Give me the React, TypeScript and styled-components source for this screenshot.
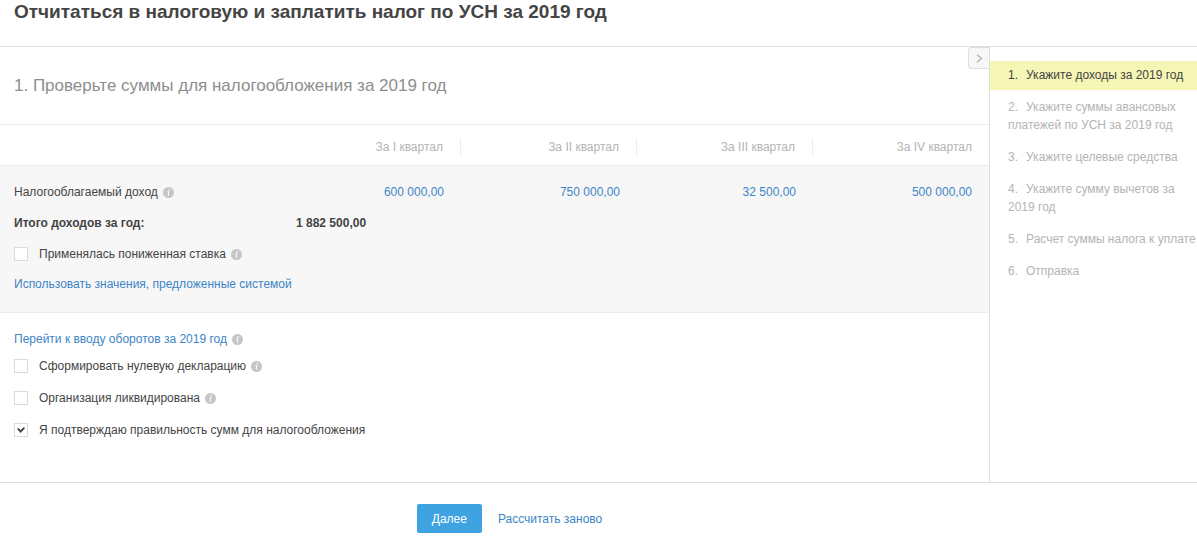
import React from 'react';
import styled, { createGlobalStyle } from 'styled-components';

const GlobalStyle = createGlobalStyle`
  *, *::before, *::after { box-sizing: border-box; }
  body {
    margin: 0;
    background: #fff;
    color: #444;
    font: 12px/18px "Liberation Sans", Arial, sans-serif;
  }
`;

const Header = styled.header`
  padding: 0 14px 22px;
  border-bottom: 1px solid #dedede;
`;

const Title = styled.h1`
  margin: 0;
  font-size: 19px;
  line-height: 24px;
`;

const Body = styled.div`
  display: grid;
  grid-template-columns: minmax(0, 1fr) 208px;
`;

const Main = styled.main`
  display: flex;
  flex-direction: column;
  position: relative;
`;

const Toggle = styled.button`
  position: absolute;
  top: 0;
  right: 0;
  display: flex;
  align-items: center;
  justify-content: center;
  width: 21px;
  height: 22px;
  padding: 0;
  border: 1px solid #dedede;
  border-right: 0;
  border-radius: 4px 0 0 4px;
  background: #f7f7f7;
  color: #b4b4b4;
`;

const StepTitle = styled.h2`
  margin: 0;
  padding: 27px 14px 26px;
  font-size: 17px;
  font-weight: 400;
  line-height: 24px;
  color: #8e8e8e;
`;

const Table = styled.table`
  width: 100%;
  border-collapse: collapse;
  table-layout: fixed;
`;

const HeadRow = styled.tr`
  border: solid #ececec;
  border-width: 1px 0;
`;

const Col = styled.col<{ $wide?: boolean }>`
  width: ${(p) => (p.$wide ? 'auto' : '176px')};
`;

const HeadCell = styled.th`
  padding: 13px 0 9px;
  font-weight: 400;
  color: #b4b4b4;
`;

const HeadLabel = styled.span<{ $divided: boolean }>`
  display: block;
  padding-right: 17px;
  border-right: ${(p) => (p.$divided ? '1px solid #ececec' : '0')};
  text-align: right;
`;

const Group = styled.tbody`
  background: #f7f7f7;
`;

const RowLabel = styled.th<{ $strong?: boolean }>`
  padding: ${(p) => (p.$strong ? '6px 0 7px 14px' : '17px 0 7px 14px')};
  font-weight: ${(p) => (p.$strong ? 700 : 400)};
  text-align: left;
`;

const Amount = styled.td`
  padding: 17px 17px 7px 0;
  text-align: right;
`;

const Total = styled.td`
  padding: 6px 0 7px 11px;
  font-weight: 700;
`;

const Link = styled.a`
  color: #3d85c6;
  text-decoration: none;
`;

const Panel = styled.div`
  padding: 0 14px 13px;
  border-bottom: 1px solid #ececec;
  background: #f7f7f7;
`;

const Options = styled.div`
  padding: 15px 14px 36px;
`;

const Line = styled.div<{ $height: number }>`
  display: flex;
  align-items: center;
  gap: 3px;
  min-height: ${(p) => p.$height}px;
`;

const Check = styled.label`
  display: flex;
  align-items: center;
  gap: 11px;
`;

const Box = styled.input`
  appearance: none;
  display: grid;
  place-items: center;
  width: 14px;
  height: 14px;
  margin: 0;
  border: 1px solid #dcdcdc;
  background: #fff;

  &:checked::before {
    content: '';
    width: 8px;
    height: 6px;
    background: #444;
    clip-path: polygon(0 35%, 15% 15%, 45% 50%, 85% 0, 100% 20%, 45% 100%);
  }
`;

const InfoMark = styled.svg`
  flex: none;
  width: 11px;
  height: 11px;
  margin-left: 2px;
  vertical-align: -2px;
`;

const Sidebar = styled.aside`
  padding-top: 14px;
  border-left: 1px solid #dedede;
`;

const Steps = styled.ol`
  display: flex;
  flex-direction: column;
  gap: 3px;
  margin: 0;
  padding: 0;
  list-style: none;
`;

const Step = styled.li<{ $active: boolean }>`
  padding: 5px 0 6px 18px;
  background: ${(p) => (p.$active ? '#f5f5b5' : 'transparent')};
  color: ${(p) => (p.$active ? '#444' : '#b4b4b4')};
`;

const StepNumber = styled.span`
  margin-right: 8px;
`;

const Footer = styled.footer`
  display: flex;
  align-items: center;
  justify-content: center;
  gap: 16px;
  padding: 21px 178px 5px 0;
  border-top: 1px solid #dedede;
`;

const Next = styled.button`
  height: 29px;
  padding: 0 15px;
  border: 0;
  border-radius: 2px;
  background: #3ea3e0;
  color: #fff;
  font: inherit;
`;

const Info = () => (
  <InfoMark viewBox="0 0 11 11" role="img" aria-label="Подсказка">
    <circle cx="5.5" cy="5.5" r="5.5" fill="#c6c6c6" />
    <circle cx="6.2" cy="2.7" r="0.8" fill="#fff" />
    <path d="M4.5 4.6h1.4L5.1 8.2h1" fill="none" stroke="#fff" strokeWidth="1" />
  </InfoMark>
);

type OptionProps = { text: string; info?: boolean; checked?: boolean; height: number };

const Option = ({ text, info, checked, height }: OptionProps) => (
  <Line $height={height}>
    <Check>
      <Box type="checkbox" defaultChecked={checked} />
      {text}
    </Check>
    {info && <Info />}
  </Line>
);

const quarters = [
  { name: 'За I квартал', amount: '600 000,00' },
  { name: 'За II квартал', amount: '750 000,00' },
  { name: 'За III квартал', amount: '32 500,00' },
  { name: 'За IV квартал', amount: '500 000,00' },
];

const steps = [
  'Укажите доходы за 2019 год',
  'Укажите суммы авансовых платежей по УСН за 2019 год',
  'Укажите целевые средства',
  'Укажите сумму вычетов за 2019 год',
  'Расчет суммы налога к уплате',
  'Отправка',
];

export default function App() {
  return (
    <>
      <GlobalStyle />
      <Header>
        <Title>Отчитаться в налоговую и заплатить налог по УСН за 2019 год</Title>
      </Header>
      <Body>
        <Main>
          <Toggle type="button" aria-label="Свернуть список шагов">
            <svg width="7" height="9" viewBox="0 0 7 9" fill="none" stroke="currentColor" strokeWidth="1.4">
              <path d="M1 0.8L5.6 4.5L1 8.2" />
            </svg>
          </Toggle>
          <StepTitle>1. Проверьте суммы для налогообложения за 2019 год</StepTitle>
          <Table>
            <colgroup>
              <Col $wide />
              {quarters.map((q) => <Col key={q.name} />)}
            </colgroup>
            <thead>
              <HeadRow>
                <td />
                {quarters.map((q, i) => (
                  <HeadCell key={q.name} scope="col">
                    <HeadLabel $divided={i < quarters.length - 1}>{q.name}</HeadLabel>
                  </HeadCell>
                ))}
              </HeadRow>
            </thead>
            <Group>
              <tr>
                <RowLabel scope="row">Налогооблагаемый доход <Info /></RowLabel>
                {quarters.map((q) => (
                  <Amount key={q.name}><Link href="#">{q.amount}</Link></Amount>
                ))}
              </tr>
              <tr>
                <RowLabel $strong scope="row">Итого доходов за год:</RowLabel>
                <Total colSpan={4}>1 882 500,00</Total>
              </tr>
            </Group>
          </Table>
          <Panel>
            <Option height={30} text="Применялась пониженная ставка" info />
            <Line $height={30}><Link href="#">Использовать значения, предложенные системой</Link></Line>
          </Panel>
          <Options>
            <Line $height={22}><Link href="#">Перейти к вводу оборотов за 2019 год</Link><Info /></Line>
            <Option height={32} text="Сформировать нулевую декларацию" info />
            <Option height={32} text="Организация ликвидирована" info />
            <Option height={32} text="Я подтверждаю правильность сумм для налогообложения" checked />
          </Options>
        </Main>
        <Sidebar>
          <Steps>
            {steps.map((s, i) => (
              <Step key={s} $active={i === 0}>
                <StepNumber>{i + 1}.</StepNumber>{s}
              </Step>
            ))}
          </Steps>
        </Sidebar>
      </Body>
      <Footer>
        <Next type="button">Далее</Next>
        <Link href="#">Рассчитать заново</Link>
      </Footer>
    </>
  );
}
